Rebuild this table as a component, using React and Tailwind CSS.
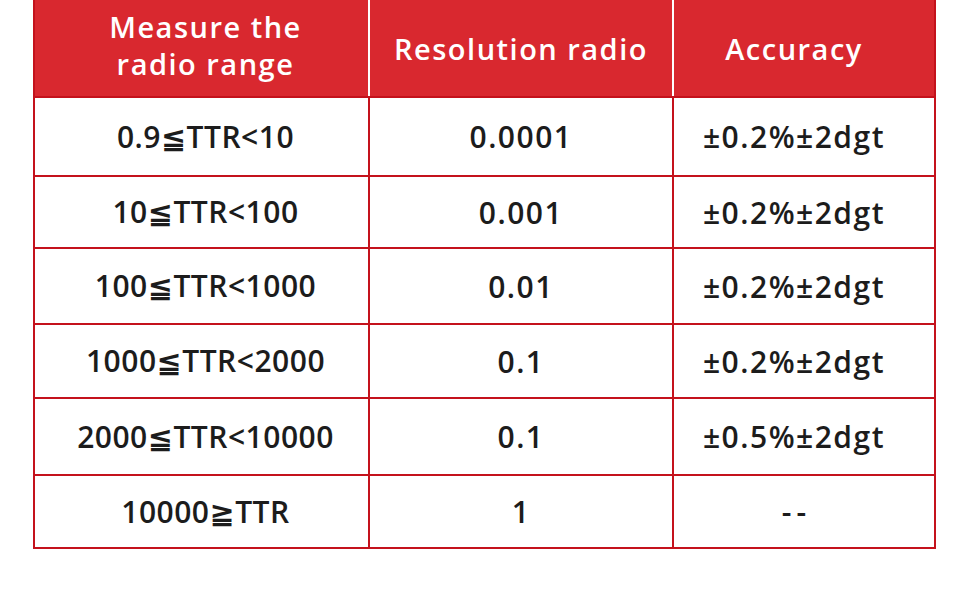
const rows = [
  { pre: '0.9', sym: '≦', post: 'TTR<10', res: '0.0001', acc: '±0.2%±2dgt', h: 'h-[79px]' },
  { pre: '10', sym: '≦', post: 'TTR<100', res: '0.001', acc: '±0.2%±2dgt', h: 'h-[72px]' },
  { pre: '100', sym: '≦', post: 'TTR<1000', res: '0.01', acc: '±0.2%±2dgt', h: 'h-[76px]' },
  { pre: '1000', sym: '≦', post: 'TTR<2000', res: '0.1', acc: '±0.2%±2dgt', h: 'h-[74px]' },
  { pre: '2000', sym: '≦', post: 'TTR<10000', res: '0.1', acc: '±0.5%±2dgt', h: 'h-[77px]' },
  { pre: '10000', sym: '≧', post: 'TTR', res: '1', acc: '--', h: 'h-[73px]' },
];

export default function App() {
  return (
    <div
      className="w-[970px] h-[600px] bg-white pl-[33px]"
      style={{ fontFamily: '"Open Sans", "Noto Sans", "Noto Sans CJK SC", sans-serif' }}
    >
      <div className="w-[903px] border-x-2 border-b-2 border-[#c4121c]">
        {/* header */}
        <div className="grid grid-cols-[333px_304px_1fr] h-[96px] bg-[#d9282f] text-white text-[29px] font-semibold leading-[37px] tracking-[1.5px] text-center">
          <div className="flex items-center justify-center pb-[6px] pl-[8px]">
            <span>Measure the<br />radio range</span>
          </div>
          <div className="flex items-center justify-center border-l-2 border-white">Resolution radio</div>
          <div className="flex items-center justify-center border-l-2 border-white pr-[20px]">Accuracy</div>
        </div>

        {/* body */}
        {rows.map((r, i) => (
          <div
            key={i}
            className={`grid grid-cols-[333px_304px_1fr] ${r.h} border-t-2 border-[#c4121c] text-[#1c1c1c] text-[30px] font-semibold tracking-[1.5px] text-center`}
          >
            <div className="flex items-center justify-center pl-[8px] tracking-[0.5px]">
              <span>
                {r.pre}
                <span className="font-bold" style={{ fontFamily: '"DejaVu Sans", sans-serif' }}>{r.sym}</span>
                {r.post}
              </span>
            </div>
            <div className="flex items-center justify-center border-l-2 border-[#c4121c]">{r.res}</div>
            <div className="flex items-center justify-center border-l-2 border-[#c4121c] pr-[20px]">
              {r.acc === '--' ? <span className="tracking-[5px] pl-[5px]">--</span> : r.acc}
            </div>
          </div>
        ))}
      </div>
    </div>
  );
}
